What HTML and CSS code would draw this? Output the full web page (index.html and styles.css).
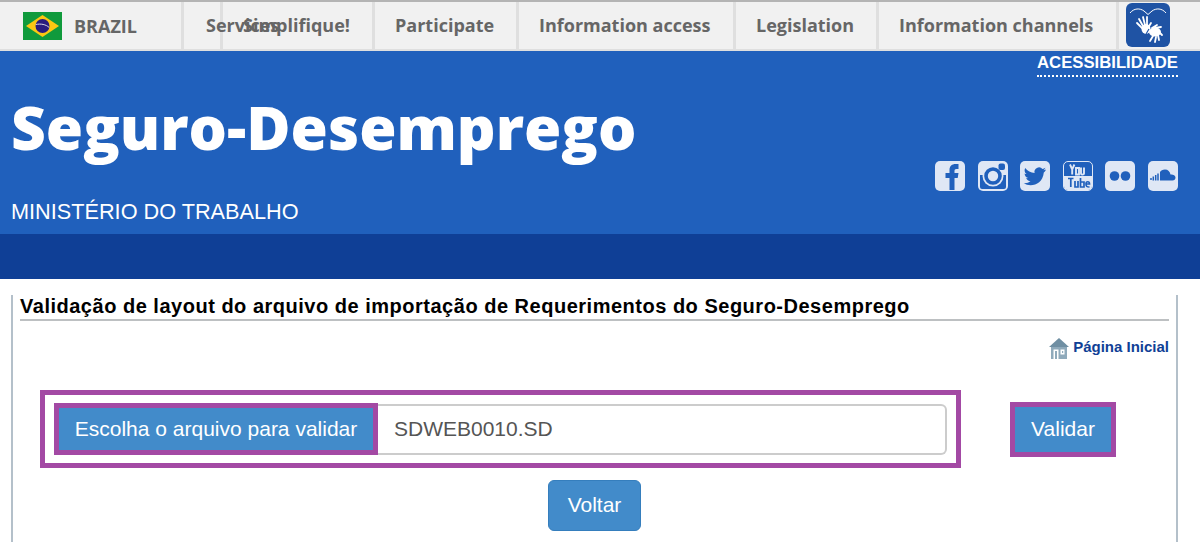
FILE: index.html
```html
<!DOCTYPE html>
<html lang="pt">
<head>
<meta charset="utf-8">
<title>Seguro-Desemprego</title>
<link rel="stylesheet" href="styles.css">
</head>
<body>
<nav class="topbar">
  <div class="country">
    <svg class="flag" viewBox="0 0 39 28"><rect width="39" height="28" fill="#109a3c"/><path d="M3 14 19.500 3 36 14 19.500 25z" fill="#fcc812"/><circle cx="19.500" cy="14" r="7" fill="#2a1d7e"/><path d="M12.800 12.500c5-1 10-.2 13.400 3" fill="none" stroke="#d8d8e8" stroke-width="1"/></svg>
    <span>BRAZIL</span>
  </div>
  <a class="item item-services">Services</a>
  <a class="item item-simplifique">Simplifique!</a>
  <a class="item item-participate">Participate</a>
  <a class="item item-access">Information access</a>
  <a class="item item-legislation">Legislation</a>
  <a class="item item-channels">Information channels</a>
  <div class="vlibras">
    <svg viewBox="0 0 44 44" class="vlibras-icon"><rect width="44" height="44" rx="6" fill="#1f53a4"/><path d="M4 10c4-5 10-5 14-2l4 3.500 4-3.500c4-3 10-3 14 2" fill="none" stroke="#fff" stroke-width="1"/><g fill="none" stroke="#fff" stroke-linecap="round" stroke-width="1.800"><path d="M17 26 11 20M17 23 13 16M19 22 17 14M21 22 21 14M22 25 25 20"/><path d="M24 38 27 33M29 39 30 34M33 37 32 32M36 32 33 29M35 24 29 25M31 22 26 25"/></g><ellipse cx="20" cy="26" rx="4.500" ry="5" fill="#fff"/><ellipse cx="29" cy="29" rx="6" ry="4.500" fill="#fff"/><path d="M23 26l-3 5" stroke="#1f53a4" stroke-width="1.200"/></svg>
  </div>
</nav>
<header class="masthead">
  <div class="brand">
    <h1 class="site-title">Seguro-Desemprego</h1>
    <p class="ministry">MINISTÉRIO DO TRABALHO</p>
  </div>
  <div class="tools">
    <a class="a11y">ACESSIBILIDADE</a>
    <div class="social">
      <svg viewBox="0 0 30 30"><rect width="30" height="30" rx="5" fill="#dfe7f5"/><path d="M14.500 29V17h-4v-5h4V9c0-4 2.500-6 6-6h3v5h-2c-1.500 0-2 .7-2 2v2h4l-.8 5h-3.200v12z" fill="#2060bc"/></svg>
      <svg viewBox="0 0 30 30"><rect width="30" height="30" rx="5" fill="#dfe7f5"/><path d="M2 14h26v12a2 2 0 0 1-2 2H4a2 2 0 0 1-2-2z" fill="#2060bc"/><circle cx="15" cy="15" r="10.500" fill="#dfe7f5"/><circle cx="15" cy="15" r="7" fill="none" stroke="#2060bc" stroke-width="3.600"/><rect x="20.500" y="2.500" width="6.500" height="6.500" rx="2" fill="#2060bc"/></svg>
      <svg viewBox="0 0 30 30"><rect width="30" height="30" rx="5" fill="#dfe7f5"/><path d="M26 8.500c-.9.400-1.700.600-2.600.8.900-.6 1.600-1.400 2-2.500-.9.500-1.800.9-2.900 1.100a4.600 4.600 0 0 0-7.900 4.200C10.800 11.400 7.400 9.700 5.200 6.900c-1.200 2.100-.6 4.800 1.400 6.100-.7 0-1.400-.2-2-.6 0 2.200 1.500 4.100 3.700 4.600-.7.200-1.400.2-2.100.1.600 1.800 2.300 3.100 4.300 3.200-1.900 1.500-4.300 2.200-6.800 1.900 7 4.500 18.900 1.500 20.100-10.800.9-.6 1.700-1.400 2.200-2.900z" fill="#2060bc"/></svg>
      <svg viewBox="0 0 30 30"><rect x=".5" y=".5" width="29" height="29" rx="4.500" fill="#2060bc" stroke="#dfe7f5"/><path d="M1 15h28v10a4 4 0 0 1-4 4H5a4 4 0 0 1-4-4z" fill="#dfe7f5"/><path d="M7 3.500l2.200 5 2.200-5M9.200 8.500v5M13 7v6.500h3V7zM18 6.500v6c0 1.500 2 1.500 3 0v-6M21 6.500v7" fill="none" stroke="#dfe7f5" stroke-width="1.900"/><path d="M5 17.500h5.500M7.800 17.500v8.500M12 20v6h3v-6M17.500 17v9h3.500v-5h-3.500M23 23h3.500c0-3-3.500-3-3.500 0s1.500 3 3.500 3" fill="none" stroke="#2060bc" stroke-width="1.700"/></svg>
      <svg viewBox="0 0 30 30"><rect width="30" height="30" rx="5" fill="#dfe7f5"/><circle cx="9.500" cy="15" r="4.800" fill="#2060bc"/><circle cx="20.500" cy="15" r="4.800" fill="#2060bc"/></svg>
      <svg viewBox="0 0 30 30"><rect width="30" height="30" rx="5" fill="#dfe7f5"/><path d="M12 19.500V11c1-1.500 2.500-2.500 5-2.500 3 0 5 2 5.500 5 2-.5 5 .8 5 3 0 1.700-1.300 3-3 3z" fill="#2060bc"/><path d="M10 19.500v-7M7.700 19.500v-5.500M5.300 19.500v-4M3 19v-2" stroke="#2060bc" stroke-width="1.500"/></svg>
    </div>
  </div>
</header>
<div class="band"></div>
<main class="content">
  <h2 class="page-title">Validação de layout do arquivo de importação de Requerimentos do Seguro-Desemprego</h2>
  <div class="home-row">
    <a class="home-link">
      <svg class="home-icon" viewBox="0 0 20 22"><path d="M10 0 20 9H0z" fill="#6f8fa3"/><path d="M2 9h16v12H2z" fill="#8faabb"/><path d="M4.500 21V11.500h5V21M11.500 11.500h4v5h-4z" fill="#fff"/><path d="M6 21v-8h2v8M13 13h1.200v2H13z" fill="#8faabb"/></svg>
      <span>Página Inicial</span>
    </a>
  </div>
  <div class="form-row">
    <div class="file-group">
      <span class="btn btn-outlined btn-file">Escolha o arquivo para validar</span>
      <input class="file-name" type="text" value="SDWEB0010.SD">
    </div>
    <span class="btn btn-outlined btn-validate">Validar</span>
  </div>
  <div class="back-row">
    <span class="btn btn-back">Voltar</span>
  </div>
</main>
</body>
</html>
```
FILE: styles.css
```css
* { box-sizing: border-box; }
html, body { margin: 0; padding: 0; height: 542px; overflow: hidden; background: #fff; }
body { font-family: "Liberation Sans", Arial, sans-serif; }

.topbar {
  display: flex;
  height: 51px;
  background: #f1f1f1;
  border-top: 2px solid #b4b4b4;
  border-bottom: 2px solid #dfdfdf;
  font-family: "Open Sans", sans-serif;
  font-weight: 700;
  font-size: 18px;
  color: #666;
}
.country { width: 184px; display: flex; align-items: center; padding-left: 23px; gap: 12px; border-right: 3px solid #dfdfdf; }
.flag { width: 39px; height: 28px; display: block; }
.item { display: flex; align-items: center; white-space: nowrap; border-right: 3px solid #dfdfdf; padding: 0 0 2px 20px; }
.item-services { width: 39px; padding-left: 22px; }
.item-simplifique { width: 152px; }
.item-participate { width: 144px; }
.item-access { width: 217px; }
.item-legislation { width: 143px; }
.item-channels { width: 240px; }
.vlibras { padding: 1px 0 0 7px; }
.vlibras-icon { width: 44px; height: 44px; display: block; }

.masthead {
  height: 183px;
  background: #2060bc;
  display: flex;
  justify-content: space-between;
  padding: 0 22px 0 11px;
  color: #fff;
}
.site-title {
  margin: 35px 0 0;
  font-family: "Open Sans", sans-serif;
  font-weight: 800;
  font-size: 60.400px;
  line-height: 82px;
  white-space: nowrap;
}
.ministry { margin: 32px 0 0; font-size: 21.700px; line-height: 24px; }
.tools { display: flex; flex-direction: column; align-items: flex-end; }
.a11y {
  margin-top: 2px;
  font-size: 16.700px;
  font-weight: 700;
  line-height: 19px;
  padding-bottom: 3px;
  border-bottom: 2px dotted #fff;
}
.social { display: flex; gap: 12.600px; margin-top: 84px; }
.social svg { width: 30px; height: 30px; display: block; }

.band { height: 45px; background: #0f3f96; }

.content {
  margin: 0 22px 0 11px;
  height: 263px;
  border-left: 2px solid #b4c0ca;
  border-right: 2px solid #b4c0ca;
  padding: 0 7px;
}
.page-title {
  margin: 16px 0 0;
  height: 26px;
  font-size: 20px;
  line-height: 22px;
  letter-spacing: 0.51px;
  color: #000;
  border-bottom: 2px solid #bdc0c2;
  white-space: nowrap;
}
.home-row { display: flex; justify-content: flex-end; margin-top: 17px; }
.home-link { display: flex; align-items: flex-start; gap: 4px; font-size: 15px; font-weight: 700; line-height: 18px; color: #103f96; }
.home-icon { width: 20px; height: 22px; display: block; }
.form-row { display: flex; align-items: center; margin: 30px 0 0 20px; }
.file-group {
  width: 921px;
  height: 78px;
  border: 5px solid #a349a4;
  display: flex;
  align-items: center;
  padding-left: 9px;
  padding-right: 9px;
}
.btn {
  display: flex;
  align-items: center;
  justify-content: center;
  background: #428bca;
  color: #fff;
  font-size: 21px;
}
.btn-outlined { border: 5px solid #a349a4; }
.btn-file { width: 324px; height: 52px; flex: none; }
.file-name {
  flex: 1;
  min-width: 0;
  height: 51px;
  border: 2px solid #ccc;
  border-left: 0;
  border-radius: 0 6px 6px 0;
  padding: 0 16px;
  font: 21px "Liberation Sans", Arial, sans-serif;
  color: #555;
  background: #fff;
}
.btn-validate { width: 106px; height: 55px; margin-left: 49px; }
.back-row { display: flex; margin: 12px 0 0 528px; }
.btn-back { width: 93px; height: 51px; padding-bottom: 2px; border: 1px solid #357ebd; border-radius: 6px; }
```
